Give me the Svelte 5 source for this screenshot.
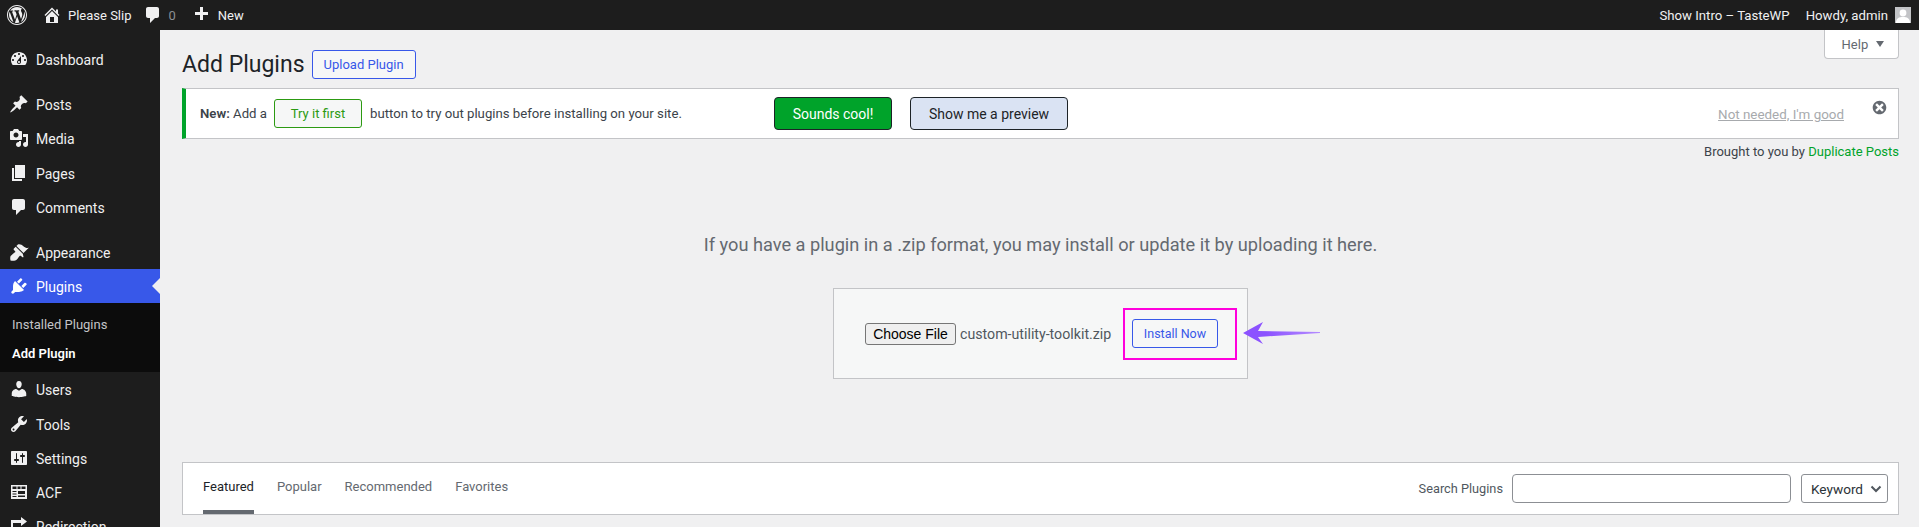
<script>
  const icons = {
    dashboard: 'M3.76 16h12.48c1.1-1.37 1.76-3.11 1.76-5 0-4.42-3.58-8-8-8s-8 3.58-8 8c0 1.89.66 3.63 1.76 5zM10 4c.55 0 1 .45 1 1s-.45 1-1 1-1-.45-1-1 .45-1 1-1zM6 6c.55 0 1 .45 1 1s-.45 1-1 1-1-.45-1-1 .45-1 1-1zm8 0c.55 0 1 .45 1 1s-.45 1-1 1-1-.45-1-1 .45-1 1-1zm-5.37 5.55L12 7v6c0 1.1-.9 2-2 2s-2-.9-2-2c0-.57.24-1.08.63-1.45zM4 10c.55 0 1 .45 1 1s-.45 1-1 1-1-.45-1-1 .45-1 1-1zm12 0c.55 0 1 .45 1 1s-.45 1-1 1-1-.45-1-1 .45-1 1-1zm-5 3c0-.55-.45-1-1-1s-1 .45-1 1 .45 1 1 1 1-.45 1-1z',
    pin: 'M10.44 3.02l1.82-1.82 6.36 6.35-1.83 1.82c-1.05-.68-2.48-.57-3.41.36l-.75.75c-.92.93-1.04 2.35-.35 3.41l-1.83 1.82-2.41-2.41-2.8 2.79c-.42.42-3.38 2.71-3.8 2.29s1.86-3.39 2.28-3.81l2.79-2.79L4.1 9.36l1.83-1.82c1.05.69 2.48.57 3.4-.36l.75-.75c.93-.92 1.05-2.35.36-3.41z',
    media: 'M13 11V4c0-.55-.45-1-1-1h-1.67L9 1H5L3.67 3H2c-.55 0-1 .45-1 1v7c0 .55.45 1 1 1h10c.55 0 1-.45 1-1zM7 4.5c1.38 0 2.5 1.12 2.5 2.5S8.38 9.5 7 9.5 4.5 8.38 4.5 7 5.62 4.5 7 4.5zM14 6h5v10.5c0 1.38-1.12 2.5-2.5 2.5S14 17.88 14 16.5s1.12-2.5 2.5-2.5c.17 0 .34.02.5.05V9h-3V6zm-4 8.05V13h2v3.5c0 1.38-1.12 2.5-2.5 2.5S7 17.88 7 16.5 8.12 14 9.5 14c.17 0 .34.02.5.05z',
    page: 'M6 15V2h10v13H6zm-1 1h8v2H3V5h2v11z',
    comment: 'M5 2h9c1.1 0 2 .9 2 2v7c0 1.1-.9 2-2 2h-2l-5 5v-5H5c-1.1 0-2-.9-2-2V4c0-1.1.9-2 2-2z',
    brush: 'M14.48 11.06L7.41 3.99l1.5-1.5c.5-.56 2.3-.47 3.51.32 1.21.8 1.43 1.28 2.91 2.1 1.18.64 2.45 1.26 4.45.85zm-.71.71L6.7 4.7 4.93 6.47c-.39.39-.39 1.02 0 1.41l1.06 1.06c.39.39.39 1.03 0 1.42-.6.6-1.43 1.11-2.21 1.69-.35.26-.7.53-1.01.84C1.43 13.23.78 15.78 1.53 18.47c2.69.75 5.24.1 6.58-1.23.31-.31.58-.66.84-1.01.58-.78 1.09-1.61 1.69-2.21.39-.39 1.03-.39 1.42 0l1.06 1.06c.39.39 1.02.39 1.41 0z',
    plugin: 'M13.11 4.36L9.87 7.6 8 5.73l3.24-3.24c.35-.34 1.05-.2 1.56.32.52.51.66 1.21.31 1.55zm-8 1.77l.91-1.12 9.01 9.01-1.19.84c-.71.71-2.63 1.16-3.82 1.16H6.14L4.9 17.26c-.59.59-1.54.59-2.12 0-.59-.58-.59-1.53 0-2.12l1.24-1.24v-3.88c0-1.13.4-3.19 1.09-3.89zm7.26 3.97l3.24-3.24c.34-.35 1.04-.21 1.55.31.52.51.66 1.21.31 1.55l-3.24 3.25z',
    users: 'M10 9.25c-2.27 0-2.73-3.44-2.73-3.44C7 4.02 7.82 2 9.97 2c2.16 0 2.98 2.02 2.71 3.81 0 0-.41 3.44-2.68 3.44zm0 2.57L12.72 10c2.39 0 4.52 2.33 4.52 4.53v2.49s-3.65 1.13-7.24 1.13c-3.65 0-7.24-1.13-7.24-1.13v-2.49c0-2.25 1.94-4.48 4.47-4.48z',
    tools: 'M16.68 9.77c-1.34 1.34-3.3 1.67-4.95.99l-5.41 6.52c-.99.99-2.59.99-3.58 0s-.99-2.59 0-3.57l6.52-5.42c-.68-1.65-.35-3.61.99-4.95 1.28-1.28 3.12-1.62 4.72-1.06l-2.89 2.89 2.82 2.82 2.86-2.87c.53 1.58.18 3.39-1.08 4.65zM3.81 16.21c.4.39 1.04.39 1.43 0 .4-.4.4-1.04 0-1.43-.39-.4-1.03-.4-1.43 0-.39.39-.39 1.03 0 1.43z',
    settings: 'M18 16V4c0-.55-.45-1-1-1H3c-.55 0-1 .45-1 1v12c0 .55.45 1 1 1h14c.55 0 1-.45 1-1zM8 11h1c.55 0 1 .45 1 1s-.45 1-1 1H8v1.5c0 .28-.22.5-.5.5s-.5-.22-.5-.5V13H6c-.55 0-1-.45-1-1s.45-1 1-1h1V5.5c0-.28.22-.5.5-.5s.5.22.5.5V11zm5-2h-1c-.55 0-1-.45-1-1s.45-1 1-1h1V5.5c0-.28.22-.5.5-.5s.5.22.5.5V7h1c.55 0 1 .45 1 1s-.45 1-1 1h-1v5.5c0 .28-.22.5-.5.5s-.5-.22-.5-.5V9z',
    acf: 'M2 3h16v14H2zM3.5 4.5V7h4V4.5zM8.5 4.5V7h3V4.5zM12.5 4.5V7h4V4.5zM3.5 9v1h4V9zM3.5 11.5v1h4v-1zM3.5 14v1h4v-1zM9 9v3h7V9zM9 13.5V15h7v-1.5z',
    redirect: 'M2 4h10V1l6 4.5-6 4.5V7H4v9h12v-4h2v6H2z'
  }

  const home = 'M16 8.5l1.53 1.53-1.06 1.06L10 4.62l-6.47 6.47-1.06-1.06L10 2.5l4 4v-2h2v4zm-6-2.46l6 5.99V18H4v-5.97zM12 17v-5H8v5h4z'
  const plus = 'M17 7v3h-5v5H9v-5H4V7h5V2h3v5h5z'
  const wp = 'M20 10c0-5.52-4.48-10-10-10S0 4.48 0 10s4.48 10 10 10 10-4.48 10-10zM10 1.01c4.96 0 8.99 4.03 8.99 8.99s-4.03 8.99-8.99 8.99S1.01 14.96 1.01 10 5.04 1.01 10 1.01zM8.01 14.82L4.96 6.61c.49-.03 1.05-.08 1.05-.08.43-.05.38-1.01-.06-.99 0 0-1.29.1-2.13.1-.15 0-.33 0-.52-.01 1.44-2.17 3.9-3.6 6.7-3.6 2.09 0 3.99.79 5.41 2.09-.6-.08-1.45.35-1.45 1.42 0 .66.38 1.22.79 1.88.31.54.5 1.22.5 2.21 0 1.34-1.27 4.48-1.27 4.48l-2.71-7.5c.48-.03.75-.16.75-.16.43-.05.38-1.1-.05-1.08 0 0-1.3.11-2.14.11-.78 0-2.11-.11-2.11-.11-.43-.02-.48 1.06-.05 1.08l.84.08 1.12 3.04zm6.02 2.15L16.64 10s.67-1.69.39-3.81c.63 1.14.94 2.42.94 3.81 0 2.96-1.56 5.58-3.94 6.97zM2.68 6.77L6.5 17.25c-2.67-1.3-4.47-4.08-4.47-7.25 0-1.16.2-2.23.65-3.23zm7.45 4.53l2.29 6.25c-.75.27-1.57.42-2.42.42-.72 0-1.41-.11-2.06-.3z'
  const dismiss = 'M10 2c4.42 0 8 3.58 8 8s-3.58 8-8 8-8-3.58-8-8 3.58-8 8-8zm5 11l-3-3 3-3-2-2-3 3-3-3-2 2 3 3-3 3 2 2 3-3 3 3z'

  const topItems = [
    { label: 'Dashboard', icon: 'dashboard', sep: true },
    { label: 'Posts', icon: 'pin', sep: true },
    { label: 'Media', icon: 'media' },
    { label: 'Pages', icon: 'page' },
    { label: 'Comments', icon: 'comment' },
    { label: 'Appearance', icon: 'brush', sep: true }
  ]
  const bottomItems = [
    { label: 'Users', icon: 'users' },
    { label: 'Tools', icon: 'tools' },
    { label: 'Settings', icon: 'settings' },
    { label: 'ACF', icon: 'acf' },
    { label: 'Redirection', icon: 'redirect' }
  ]
  const tabs = ['Featured', 'Popular', 'Recommended', 'Favorites']
</script>

{#snippet menuItem(item)}
  <a class="item" class:sep={item.sep} href="#top">
    <svg class="mi" viewBox="0 0 20 20"><path fill-rule="evenodd" d={icons[item.icon]} /></svg>
    <span>{item.label}</span>
  </a>
{/snippet}

<div class="page">
  <header class="bar">
    <svg class="wp" viewBox="0 0 20 20"><path d={wp} /></svg>
    <svg class="bi home" viewBox="0 0 20 20"><path fill-rule="evenodd" d={home} /></svg>
    <span class="site">Please Slip</span>
    <svg class="bi cmt" viewBox="0 0 20 20"><path d={icons.comment} /></svg>
    <span class="count">0</span>
    <svg class="bi add" viewBox="0 0 20 20"><path d={plus} /></svg>
    <span>New</span>
    <span class="right">Show Intro – TasteWP</span>
    <span class="howdy">Howdy, admin</span>
    <span class="avatar">
      <svg viewBox="0 0 16 16"><circle cx="8" cy="6" r="3.4" /><path d="M1 16c0-5 3-6 7-6s7 1 7 6z" /></svg>
    </span>
  </header>

  <div class="body">
    <aside class="side">
      {#each topItems as item}
        {@render menuItem(item)}
      {/each}
      <a class="item current" href="#top">
        <svg class="mi" viewBox="0 0 20 20"><path d={icons.plugin} /></svg>
        <span>Plugins</span>
      </a>
      <div class="sub">
        <a href="#top">Installed Plugins</a>
        <a class="on" href="#top">Add Plugin</a>
      </div>
      {#each bottomItems as item}
        {@render menuItem(item)}
      {/each}
    </aside>

    <main class="main">
      <button class="help">Help <i class="caret"></i></button>

      <div class="title">
        <h1>Add Plugins</h1>
        <button class="btn">Upload Plugin</button>
      </div>

      <div class="notice">
        <span class="msg lead"><b>New:</b> Add a</span>
        <span class="try">Try it first</span>
        <span class="msg long">button to try out plugins before installing on your site.</span>
        <button class="cool">Sounds cool!</button>
        <button class="preview">Show me a preview</button>
        <a class="skip" href="#top">Not needed, I'm good</a>
        <svg class="close" viewBox="0 0 20 20"><path fill-rule="evenodd" d={dismiss} /></svg>
      </div>

      <p class="brought">Brought to you by <a href="#top">Duplicate Posts</a></p>

      <p class="hint">If you have a plugin in a .zip format, you may install or update it by uploading it here.</p>

      <div class="upload">
        <button class="file">Choose File</button>
        <span class="fname">custom-utility-toolkit.zip</span>
        <button class="btn install">Install Now</button>
        <span class="mark"></span>
        <svg class="arrow" viewBox="0 0 78 22">
          <defs>
            <linearGradient id="fade" x1="0" x2="1" y1="0" y2="0">
              <stop offset="0.3" stop-color="#8c52ff" />
              <stop offset="1" stop-color="#b48cff" />
            </linearGradient>
          </defs>
          <polygon fill="url(#fade)" points="1,11 21,0 16,9 78,10 78,11 16,15 21,22" />
        </svg>
      </div>

      <div class="filter">
        <nav class="tabs">
          {#each tabs as tab, i}
            <a class:active={i === 0} href="#top">{tab}</a>
          {/each}
        </nav>
        <label class="search" for="q">Search Plugins</label>
        <input id="q" class="query" type="search" />
        <span class="select">Keyword
          <svg viewBox="0 0 12 8"><path d="M1.5 1.5 6 6l4.500-4.500" /></svg>
        </span>
      </div>
    </main>
  </div>
</div>

<style>
  :global(body) {
    margin: 0;
    background: #f0f0f1;
    overflow: hidden;
  }

  .page {
    height: 527px;
    overflow: hidden;
    font-family: Roboto, "Open Sans", sans-serif;
    font-size: 13px;
    color: #3c434a;
  }

  button {
    font-family: inherit;
    cursor: pointer;
  }

  /* top bar */
  .bar {
    height: 30px;
    background: #1d1d1d;
    color: #f0f0f1;
    display: flex;
    align-items: center;
    box-sizing: border-box;
    padding: 0 8px 0 7px;
  }

  .bar svg {
    fill: #f0f0f1;
  }

  .wp {
    width: 20px;
    height: 20px;
  }

  .bi {
    width: 20px;
    height: 20px;
    flex: none;
  }

  .home {
    margin-left: 15px;
  }

  .site {
    margin-left: 6px;
  }

  .cmt {
    margin-left: 11px;
  }

  .count {
    margin-left: 6px;
    color: #8c8f94;
  }

  .add {
    margin-left: 15px;
  }

  .bar .add + span {
    margin-left: 7px;
  }

  .right {
    margin-left: auto;
    font-size: 13.2px;
  }

  .howdy {
    margin-left: 16px;
    font-size: 13.2px;
  }

  .avatar {
    width: 16px;
    height: 16px;
    margin-left: 7px;
    background: #c3c4c7;
    display: flex;
  }

  .bar .avatar svg {
    fill: #fff;
  }

  /* side menu */
  .body {
    display: flex;
    height: 497px;
  }

  .side {
    width: 160px;
    flex: none;
    background: #1d1d1d;
    padding-top: 1px;
  }

  .item {
    height: 34.2px;
    display: flex;
    align-items: center;
    color: #f0f0f1;
    font-size: 14px;
    text-decoration: none;
  }

  .item span {
    padding-top: 2px;
  }

  .item.sep {
    margin-top: 11px;
  }

  .mi {
    width: 20px;
    height: 20px;
    margin: 0 7px 0 9px;
    fill: #f0f0f1;
    flex: none;
  }

  .current {
    position: relative;
    background: #3858e9;
    color: #fff;
  }

  .current::after {
    content: "";
    position: absolute;
    right: 0;
    top: 9px;
    border: 8px solid transparent;
    border-right-color: #f0f0f1;
    border-left-width: 0;
  }

  .current .mi {
    fill: #fff;
  }

  .sub {
    background: #0c0c0c;
    height: 69px;
    box-sizing: border-box;
    padding-top: 7px;
  }

  .sub a {
    display: block;
    height: 29px;
    line-height: 29px;
    padding-left: 12px;
    color: #c3c4c7;
    font-size: 13px;
    text-decoration: none;
  }

  .sub .on {
    color: #fff;
    font-weight: 600;
  }

  /* content */
  .main {
    flex: 1;
    padding: 0 20px 0 22px;
    min-width: 0;
  }

  .help {
    float: right;
    width: 75px;
    height: 29px;
    background: #fff;
    border: 1px solid #c3c4c7;
    border-top: 0;
    border-radius: 0 0 4px 4px;
    color: #646970;
    font-size: 13px;
    padding: 0 0 0 3px;
  }

  .caret {
    display: inline-block;
    border: 4.500px solid transparent;
    border-top: 6px solid #646970;
    border-bottom: 0;
    margin-left: 5px;
    vertical-align: 2px;
  }

  .title {
    display: flex;
    align-items: center;
    padding-top: 20px;
    height: 29px;
  }

  h1 {
    margin: 0 7px 0 0;
    font-size: 23px;
    font-weight: 400;
    color: #1d2327;
  }

  .btn {
    height: 29px;
    background: #f6f7f7;
    border: 1px solid #3858e9;
    border-radius: 3px;
    color: #3858e9;
    font-size: 13px;
    padding: 0 11px;
  }

  .notice {
    margin-top: 9px;
    height: 51px;
    box-sizing: border-box;
    background: #fff;
    border: 1px solid #c3c4c7;
    border-left: 4px solid #00a32a;
    display: flex;
    align-items: center;
    padding-left: 14px;
    position: relative;
  }

  .msg {
    font-size: 13.2px;
    flex: none;
    white-space: nowrap;
  }

  .msg b {
    font-weight: 600;
  }

  .lead {
    width: 66px;
  }

  .long {
    width: 312px;
  }

  .try {
    margin: 0 8px;
    width: 88px;
    height: 29px;
    box-sizing: border-box;
    border: 1px solid #2c9a12;
    border-radius: 3px;
    background: #f6f7f7;
    color: #2c9a12;
    display: flex;
    align-items: center;
    justify-content: center;
  }

  .cool, .preview {
    height: 33px;
    border: 1px solid #1d2327;
    border-radius: 4px;
    font-size: 14px;
    padding: 0;
  }

  .cool {
    width: 118px;
    margin-left: 92px;
    background: #00a32a;
    color: #fff;
  }

  .preview {
    width: 158px;
    margin-left: 18px;
    background: #dae3f3;
    color: #1d2327;
  }

  .skip {
    margin-left: auto;
    margin-right: 54px;
    margin-top: 1px;
    color: #a7aaad;
    font-size: 13.4px;
  }

  .close {
    position: absolute;
    right: 10px;
    top: 10px;
    width: 17px;
    height: 17px;
    fill: #646970;
  }

  .brought {
    margin: 0;
    height: 26px;
    line-height: 26px;
    text-align: right;
  }

  .brought a {
    color: #00a32a;
    text-decoration: none;
  }

  .hint {
    margin: 0;
    padding-top: 64px;
    height: 32px;
    line-height: 32px;
    text-align: center;
    font-size: 18.2px;
    color: #646970;
  }

  .upload {
    position: relative;
    width: 415px;
    height: 91px;
    box-sizing: border-box;
    margin: 27px auto 0;
    background: #f6f7f7;
    border: 1px solid #c3c4c7;
    display: flex;
    align-items: center;
    padding-left: 31px;
  }

  .file {
    width: 91px;
    height: 22px;
    padding: 0;
    font-family: "Liberation Sans", Arial, sans-serif;
    font-size: 14px;
    color: #000;
    background: #efefef;
    border: 1px solid #767676;
    border-radius: 3px;
  }

  .fname {
    margin-left: 4px;
    width: 172px;
    flex: none;
    font-size: 14.2px;
    color: #50575e;
  }

  .install {
    width: 86px;
    padding: 0;
    font-size: 12.5px;
  }

  .mark {
    position: absolute;
    left: 289px;
    top: 19px;
    width: 114px;
    height: 52px;
    box-sizing: border-box;
    border: 2px solid #ff00dc;
  }

  .arrow {
    position: absolute;
    left: 408px;
    top: 33px;
    width: 78px;
    height: 22px;
  }

  .filter {
    margin-top: 83px;
    height: 53px;
    box-sizing: border-box;
    background: #fff;
    border: 1px solid #c3c4c7;
    display: flex;
    align-items: center;
    padding: 0 10px 0 20px;
  }

  .tabs {
    display: flex;
    gap: 23px;
    align-self: stretch;
    margin-right: auto;
  }

  .tabs a {
    color: #646970;
    text-decoration: none;
    line-height: 48px;
    height: 51px;
    box-sizing: border-box;
  }

  .tabs .active {
    color: #1d2327;
    border-bottom: 4px solid #646970;
  }

  .search {
    color: #50575e;
    font-size: 12.75px;
  }

  .query {
    width: 279px;
    height: 29px;
    box-sizing: border-box;
    margin: 0 10px 0 9px;
    border: 1px solid #8c8f94;
    border-radius: 4px;
    background: #fff;
  }

  .select {
    width: 87px;
    height: 29px;
    box-sizing: border-box;
    border: 1px solid #8c8f94;
    border-radius: 3px;
    background: #fff;
    color: #2c3338;
    font-size: 13.6px;
    display: flex;
    align-items: center;
    justify-content: space-between;
    padding: 0 5px 0 9px;
  }

  .select svg {
    width: 12px;
    height: 8px;
    fill: none;
    stroke: #50575e;
    stroke-width: 2;
  }
</style>
